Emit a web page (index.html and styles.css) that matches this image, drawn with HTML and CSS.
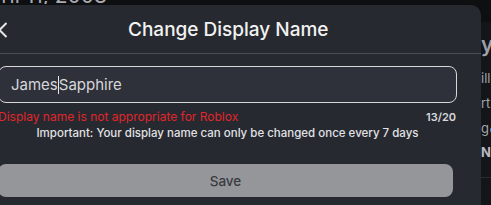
FILE: index.html
```html
<!DOCTYPE html>
<html lang="en">
<head>
    <meta charset="UTF-8">
    <title>Change Display Name</title>
    <link rel="stylesheet" href="styles.css">
</head>
<body>
    <div class="page">
        <div class="join-date">April 11, 2008</div>
        <div class="side-panel">
            <div class="side-title">y</div>
            <div class="side-line">ill</div>
            <div class="side-line">rt</div>
            <div class="side-line">g <span class="dot"></span></div>
            <div class="side-line bold">N</div>
            <div class="side-rule"></div>
        </div>
    </div>

    <div class="modal">
        <div class="modal-header">
            <button class="back-button">
                <svg width="10" height="16" viewBox="0 0 10 16"><path d="M8.5 1 L1.5 8 L8.5 15" fill="none" stroke="#e6e6e6" stroke-width="2"/></svg>
            </button>
            <h1 class="modal-title">Change Display Name</h1>
        </div>
        <div class="modal-body">
            <div class="name-input">James<span class="caret"></span>Sapphire</div>
            <div class="input-info">
                <span class="error">Display name is not appropriate for Roblox</span>
                <span class="counter">13/20</span>
            </div>
            <p class="notice">Important: Your display name can only be changed once every 7 days</p>
            <button class="save-button">Save</button>
        </div>
    </div>
</body>
</html>
```

FILE: styles.css
```css
body {
    margin: 0;
    padding: 0;
    width: 491px;
    height: 205px;
    background-color: #0e0f11;
    font-family: 'Inter', 'Noto Sans', sans-serif;
    position: relative;
    overflow: hidden;
}
.page {
    height: 100%;
    display: flex;
    justify-content: space-between;
}
.join-date {
    margin-top: -16px;
    margin-left: -26px;
    font-size: 21px;
    line-height: 24px;
    height: 20px;
    overflow: hidden;
    color: #a9abb0;
    white-space: nowrap;
}
.side-panel {
    margin-top: 22px;
    width: 10px;
    background-color: #141519;
    display: flex;
    flex-direction: column;
    padding-left: 1px;
    overflow: hidden;
}
.side-title {
    margin-top: 10px;
    font-size: 21px;
    line-height: 26px;
    font-weight: 600;
    color: #9ea0a6;
}
.side-line {
    margin-top: 9px;
    font-size: 13px;
    line-height: 16px;
    color: #a2a4a9;
    white-space: nowrap;
}
.side-title + .side-line {
    margin-top: 12px;
}
.side-line.bold {
    font-weight: 700;
    color: #b8bac0;
    margin-top: 8px;
}
.dot {
    display: inline-block;
    width: 6px;
    height: 6px;
    margin-left: -3px;
    border-radius: 50%;
    background-color: #3a8fe0;
}
.side-rule {
    margin-top: 17px;
    border-top: 1px solid #2a2b30;
}
.modal {
    position: absolute;
    left: -26px;
    top: 5px;
    width: 507px;
    height: 215px;
    background-color: #272930;
    border-radius: 10px;
}
.modal-header {
    height: 48px;
    border-bottom: 1px solid #4a4c53;
    display: flex;
    align-items: center;
    position: relative;
}
.back-button {
    position: absolute;
    left: 24px;
    top: 17px;
    padding: 0;
    border: none;
    background: transparent;
}
.modal-title {
    margin: 0 0 0 154px;
    font-size: 19px;
    font-weight: 500;
    color: #f2f2f2;
}
.modal-body {
    padding: 12px 24px 0 24px;
}
.name-input {
    height: 35px;
    border: 1px solid #d6d7da;
    border-radius: 8px;
    background-color: #2f313a;
    color: #d6d7db;
    font-size: 15px;
    line-height: 35px;
    padding-left: 12px;
}
.caret {
    display: inline-block;
    width: 1px;
    height: 18px;
    background-color: #e8e8e8;
    vertical-align: -4px;
}
.input-info {
    display: flex;
    justify-content: space-between;
    margin-top: 6px;
    line-height: 16px;
}
.error {
    color: #e0262b;
    font-size: 12px;
}
.counter {
    color: #d8d9dc;
    font-size: 11px;
    font-weight: 600;
    margin-right: 1px;
}
.notice {
    margin: 0;
    line-height: 16px;
    text-align: center;
    font-size: 11.5px;
    font-weight: 500;
    color: #e1e2e5;
}
.save-button {
    margin-top: 23px;
    width: 455px;
    height: 33px;
    border: none;
    border-radius: 8px;
    background-color: #95969a;
    color: #393b40;
    font-family: 'Inter', 'Noto Sans', sans-serif;
    font-size: 13.5px;
    font-weight: 500;
}
```
